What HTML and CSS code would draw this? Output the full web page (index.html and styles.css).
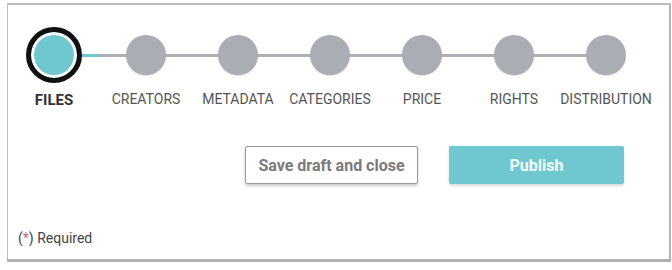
FILE: index.html
```html
<!DOCTYPE html>
<html>
<head>
<meta charset="utf-8">
<link rel="stylesheet" href="styles.css">
</head>
<body>
<div class="frame">
  <ol class="stepper">
    <li class="step active"><span class="dot"></span><span class="label">FILES</span></li>
    <li class="step"><span class="dot"></span><span class="label">CREATORS</span></li>
    <li class="step"><span class="dot"></span><span class="label">METADATA</span></li>
    <li class="step"><span class="dot"></span><span class="label">CATEGORIES</span></li>
    <li class="step"><span class="dot"></span><span class="label">PRICE</span></li>
    <li class="step"><span class="dot"></span><span class="label">RIGHTS</span></li>
    <li class="step"><span class="dot"></span><span class="label">DISTRIBUTION</span></li>
  </ol>
  <div class="actions">
    <button class="btn btn-secondary">Save draft and close</button>
    <button class="btn btn-primary">Publish</button>
  </div>
  <p class="required"><span class="star">(<span class="ast">*</span>)</span> Required</p>
</div>
</body>
</html>
```
FILE: styles.css
```css
html, body {
  margin: 0;
  padding: 0;
  background: #fff;
}
body {
  font-family: Roboto, "Liberation Sans", Arial, sans-serif;
  width: 672px;
  height: 270px;
  overflow: hidden;
}
.frame {
  box-sizing: border-box;
  margin: 3px 0 0 7px;
  width: 664px;
  height: 259px;
  border-top: 2px solid #bcbcbc;
  border-left: 1px solid #bcbcbc;
  border-right: 2px solid #b4b4b4;
  border-bottom: 3px solid #b0b0b0;
  padding-top: 22px;
  position: relative;
}
.stepper {
  list-style: none;
  margin: 0;
  padding: 0;
  display: grid;
  grid-template-columns: repeat(7, 92px);
}
.step {
  display: flex;
  flex-direction: column;
  align-items: center;
  position: relative;
}
.step::after {
  content: "";
  position: absolute;
  left: 46px;
  top: 27px;
  width: 92px;
  height: 3px;
  background: #aeb0b4;
  z-index: 0;
}
.step:last-child::after {
  display: none;
}
.step.active::after {
  background: linear-gradient(to right, #6fc8cf 0, #6fc8cf 46px, #aeb0b4 46px);
}
.dot {
  position: relative;
  z-index: 1;
  width: 40px;
  height: 40px;
  margin: 8px 0;
  border-radius: 50%;
  background: #aaaeb4;
  box-shadow: 0 1px 1px rgba(0,0,0,0.12);
}
.step.active .dot {
  box-sizing: border-box;
  width: 56px;
  height: 56px;
  margin: 0;
  background: #6fc8cf;
  border: 5px solid #111;
  box-shadow: inset 0 0 0 3px #fff;
}
.label {
  margin-top: 7px;
  font-size: 14px;
  line-height: 18px;
  color: #555;
  white-space: nowrap;
}
.step.active .label {
  margin-top: 8px;
  font-size: 15px;
  font-weight: 700;
  color: #333;
  line-height: 18px;
}
.actions {
  display: flex;
  justify-content: flex-end;
  gap: 31px;
  padding-right: 45px;
  margin-top: 37px;
}
.btn {
  font-family: Roboto, "Liberation Sans", Arial, sans-serif;
  font-weight: 700;
  font-size: 16px;
  height: 38px;
  border-radius: 2px;
  cursor: pointer;
  padding: 0;
}
.btn-secondary {
  width: 173px;
  background: #fff;
  color: #7a7a7a;
  border: 1px solid #9a9a9a;
  box-shadow: 0 2px 3px rgba(0,0,0,0.2);
}
.btn-primary {
  width: 175px;
  background: #6fc8cf;
  color: #f4fbfc;
  border: none;
  box-shadow: 0 2px 3px rgba(0,0,0,0.15);
}
.required {
  margin: 45px 0 0 10px;
  font-size: 14px;
  line-height: 18px;
  color: #444;
}
.ast {
  color: #d0607e;
}
```
